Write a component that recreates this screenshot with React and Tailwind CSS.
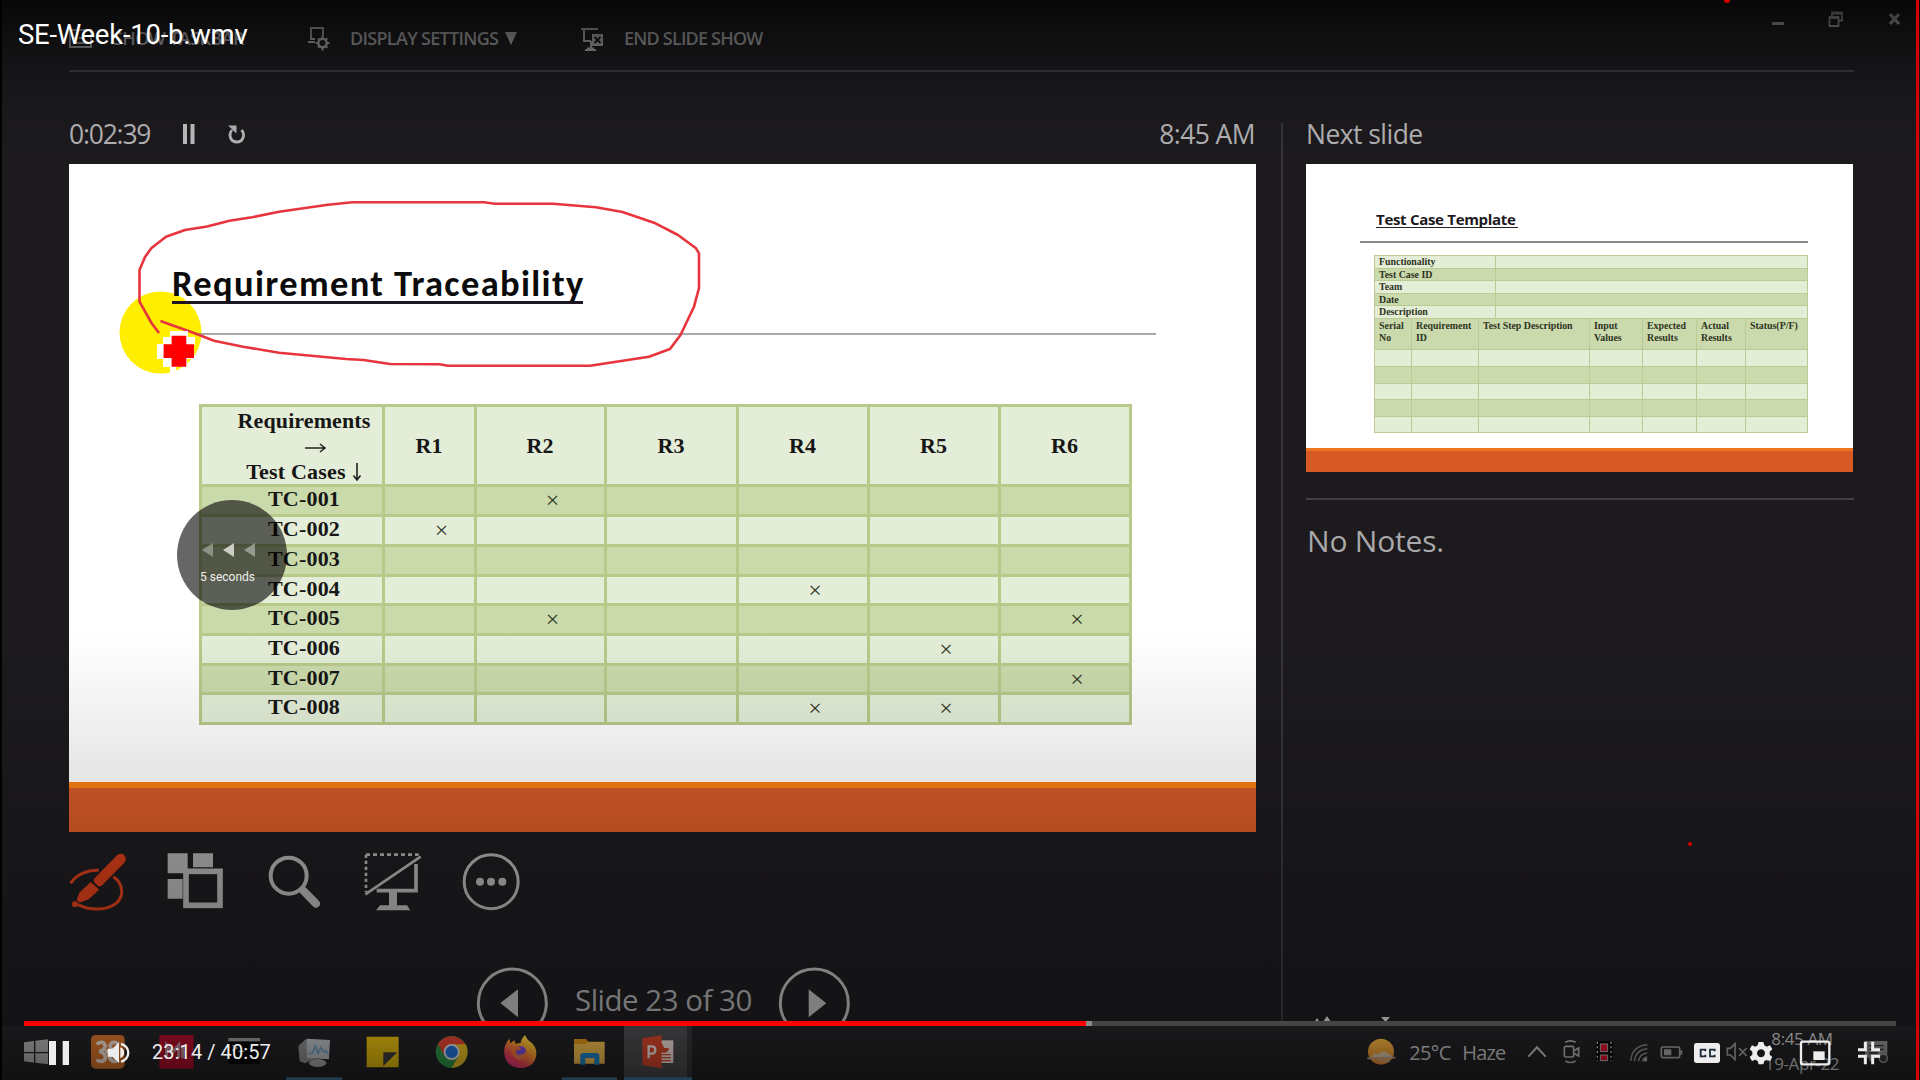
import React from "react";

const SEGOE = "font-['Open_Sans','Noto_Sans',sans-serif]";
const ROBOTO = "font-['Roboto',sans-serif]";
const SERIF = "font-['Liberation_Serif',serif]";

/* Icon whose drawing units are thirds of a pixel. */
function Icon({ x, y, w, h, className = "", children }) {
  return (
    <svg
      width={w}
      height={h}
      viewBox={`${x} ${y} ${w * 3} ${h * 3}`}
      className={`block shrink-0 ${className}`}
      fill="none"
    >
      {children}
    </svg>
  );
}

function TopBar() {
  return (
    <div className={`flex h-[70px] shrink-0 items-start text-[#9a9a9c] ${SEGOE}`}>
      <svg width="24" height="20" viewBox="0 0 24 20" className="mt-[29px] shrink-0" fill="none" stroke="#8b8b8b" strokeWidth="2">
        <rect x="1" y="1" width="21" height="17" />
        <path d="M4 14h15M4 9h3M10 9h3" />
      </svg>
      <span className="ml-[20px] mt-[25px] w-[134px] whitespace-nowrap text-[18px] font-semibold leading-[26px] tracking-[-0.6px]">SHOW TASKBAR</span>
      <svg width="26" height="26" viewBox="0 0 26 26" className="ml-[59px] mt-[26px] shrink-0" fill="none" stroke="#a0a0a0" strokeWidth="1.8">
        <path d="M17 10V2H5v11h4M2 16h7" />
        <circle cx="16.5" cy="17" r="4.2" strokeWidth="2.4" />
        <path d="M16.5 10v2M16.5 22v2.500M9.800 17h2M21 17h2.500M12 12.500l1.300 1.300M20 20.500l1.300 1.300M12 21.500l1.300-1.300M20 13.500l1.300-1.300" strokeWidth="2.200" />
      </svg>
      <span className="ml-[18px] mt-[25px] w-[152px] whitespace-nowrap text-[18px] font-semibold leading-[26px] tracking-[-0.7px]">DISPLAY SETTINGS</span>
      <svg width="14" height="14" viewBox="0 0 14 14" className="ml-[2px] mt-[32px] shrink-0">
        <path d="M1 0h12L7 13z" fill="#a0a0a0" />
      </svg>
      <svg width="26" height="26" viewBox="0 0 26 26" className="ml-[62px] mt-[27px] shrink-0" fill="none" stroke="#a0a0a0" strokeWidth="2">
        <path d="M1 2h17M4 2v12h7M11 14v7M5 23h11" />
        <path d="M7 22h7" strokeWidth="3" />
        <rect x="12" y="7" width="11" height="12" fill="#a0a0a0" stroke="none" />
        <path d="M14.500 10l6 6M20.500 10l-6 6" stroke="#111" strokeWidth="1.800" />
      </svg>
      <span className="ml-[18px] mt-[25px] whitespace-nowrap text-[18px] font-semibold leading-[26px] tracking-[-0.8px]">END SLIDE SHOW</span>
      <div className="ml-auto mr-[18px] mt-[10px] flex items-start">
        <svg width="14" height="18" viewBox="0 0 14 18"><path d="M1 12h12v3H1z" fill="#a0a0a0" /></svg>
        <svg width="16" height="18" viewBox="0 0 16 18" className="ml-[43px]" fill="none" stroke="#999" strokeWidth="1.800">
          <path d="M4 6V2.500h10v8h-3M4 3.500h10" /><path d="M1.500 7h9v9h-9zM1.500 8h9" />
        </svg>
        <svg width="14" height="18" viewBox="0 0 14 18" className="ml-[44px]"><path d="M2 4l9 10M11 4L2 14" stroke="#a0a0a0" strokeWidth="3.200" /></svg>
      </div>
    </div>
  );
}

const rows = [
  ["TC-001", 2],
  ["TC-002", 1],
  ["TC-003"],
  ["TC-004", 4],
  ["TC-005", 2, 6],
  ["TC-006", 5],
  ["TC-007", 6],
  ["TC-008", 4, 5],
];

function TraceTable() {
  return (
    <div className={`ml-[130px] grid w-[933px] grid-cols-[180px_89px_127px_129px_128px_128px_128px] grid-rows-[77px_27px_27px_27px_26px_27px_27px_26px_27px] gap-[3px] border-[3px] border-[#b8c98a] bg-[#b8c98a] text-[22px] font-bold text-[#161616] ${SERIF}`}>
      <div className="flex flex-col items-center bg-[#e4edd7] pl-[24px] leading-[25px]">
        <span className="mt-px tracking-[0.1px]">Requirements</span>
        <svg width="24" height="12" viewBox="0 0 24 12" className="mb-[5px] mt-[9px] ml-[24px]" fill="none" stroke="#222" strokeWidth="1.500">
          <path d="M1 6h20M16 2l5 4-5 4" />
        </svg>
        <span className="flex items-center tracking-[0.200px]">
          Test Cases
          <svg width="10" height="20" viewBox="0 0 10 20" className="ml-[6px]" fill="none" stroke="#222" strokeWidth="1.600">
            <path d="M5 1v17M1.500 13.500L5 18l3.500-4.500" />
          </svg>
        </span>
      </div>
      {[1, 2, 3, 4, 5, 6].map((n) => (
        <div key={n} className="flex items-center justify-center bg-[#e4edd7] pr-px">R{n}</div>
      ))}
      {rows.map(([name, ...marks], r) => (
        <React.Fragment key={name}>
          <div className={`flex items-start justify-center whitespace-nowrap pl-[24px] leading-[24px] tracking-[0.200px] ${r % 2 ? "bg-[#e3edd7]" : "bg-[#cadaab]"}`}>{name}</div>
          {[1, 2, 3, 4, 5, 6].map((c) => (
            <div key={c} className={`flex items-start justify-center pl-[24px] pt-px ${r % 2 ? "bg-[#e3edd7]" : "bg-[#cadaab]"}`}>
              {marks.includes(c) && (
                <span className="text-[24px] font-normal leading-[24px] text-[#2c3222]">×</span>
              )}
            </div>
          ))}
        </React.Fragment>
      ))}
    </div>
  );
}

const stroke =
  "M159 333L151.500 323 139.500 301.700V270L145 257 151.500 248 166 236.700 185 230 207 226.500 229.600 220.700 252 217.300 279 211.700 328 204.700 352.400 202.300H484L495 203.700H553L596 207.300 622.500 212 654 222.700 678 235 696 248.300 699 253.300V288L694 306.700 680.500 335 670 349 649 356.700 590 365.700H448L439.500 364.300 390 364 363.600 360 346 359 279 352.700 243 346.700 214 340.700 194 333 160.400 321";

function CurrentSlide() {
  return (
    <div className="relative flex h-[668px] w-[1187px] flex-col bg-white">
      <svg className="absolute left-0 top-0" width="1187" height="260" viewBox="69 164 1187 260" fill="none">
        <circle cx="160.500" cy="332.500" r="41" fill="#ffee00" />
        <path d="M195 334H1156" stroke="#8d8d90" strokeWidth="1.600" />
      </svg>
      <div className="relative ml-[103px] mt-[98px] h-[42px] w-[411px] whitespace-nowrap border-b-[3px] border-[#1b1622] pt-[2px] font-['Carlito','Lato',sans-serif] text-[36.500px] font-bold leading-[40px] tracking-[1.350px] text-[#0b0b0b]">
        Requirement Traceability
      </div>
      <svg className="absolute left-0 top-0" width="1187" height="260" viewBox="69 164 1187 260" fill="none">
        <path d={stroke} stroke="#e8343c" strokeWidth="2.600" strokeLinejoin="round" />
        <path d="M170 331h18v6h7v8h-1v14h-7v8h-11v7h-6v-7h-7v-8h-6v-15h6v-7h7z" fill="#fff" />
        <path d="M171.600 335.700h14.700v8.600h7.700V358h-7.700v8.700h-14.700V358h-8v-13.700h8z" fill="#ff0000" />
      </svg>
      <div className="mt-[100px]"><TraceTable /></div>
      <div className="mt-auto h-[50px] border-t-[6px] border-[#fa8010] bg-[#d65a27]" />
    </div>
  );
}

function Tools() {
  return (
    <div className="mt-[20px] flex h-[60px] items-start">
      <Icon x={57} y={276} w={58} h={60}>
        <path d="M62 370C78 345 112 329 146 331M190 350C222 372 222 410 198 430C172 452 118 452 84 434" stroke="#c93a18" strokeWidth="9" />
        <path d="M212 297L146 364" stroke="#c93a18" strokeWidth="31" strokeLinecap="round" />
        <path d="M122 366L149 388 116 418 88 428 80 420 88 398z" fill="#c93a18" />
        <path d="M124 362L150 388" stroke="#17161a" strokeWidth="5" />
        <circle cx="75" cy="433" r="9" fill="#c93a18" />
      </Icon>
      <Icon x={351} y={276} w={58} h={60} className="ml-[40px]">
        <path d="M353 280h60v60h-60zM429 280h60v42h-60zM353 357h45v59h-45z" fill="#a8a6a7" />
        <rect x="408" y="334" width="102" height="102" stroke="#a8a6a7" strokeWidth="17" />
      </Icon>
      <Icon x={651} y={276} w={54} h={60} className="ml-[42px]">
        <circle cx="716" cy="347" r="54" stroke="#a8a6a7" strokeWidth="12" />
        <path d="M758 390L798 431" stroke="#a8a6a7" strokeWidth="24" strokeLinecap="round" />
      </Icon>
      <Icon x={942} y={276} w={58} h={60} className="ml-[43px]">
        <path d="M948 284H1106" stroke="#a8a6a7" strokeWidth="8" strokeDasharray="12 9" />
        <path d="M948 284V396" stroke="#a8a6a7" strokeWidth="8" strokeDasharray="10 8" />
        <path d="M946 403L1112 290" stroke="#a8a6a7" strokeWidth="8" />
        <path d="M1098 312V392H980" stroke="#a8a6a7" strokeWidth="11" />
        <path d="M1017 392h24v44h30l10 15H978l12-15h27z" fill="#a8a6a7" />
      </Icon>
      <Icon x={1236} y={276} w={58} h={60} className="ml-[40px]">
        <circle cx="1323.500" cy="365" r="81" stroke="#a8a6a7" strokeWidth="9" />
        <g fill="#a8a6a7"><circle cx="1290" cy="365" r="12" /><circle cx="1323" cy="365" r="12" /><circle cx="1357" cy="365" r="12" /></g>
      </Icon>
    </div>
  );
}

function SlideNav() {
  return (
    <div className="ml-[407px] mt-[54px] flex h-[58px] w-[375px] items-start overflow-hidden">
      <Icon x={48} y={78} w={73} h={73}>
        <circle cx="157" cy="189" r="102" stroke="#b0b0b0" strokeWidth="9" />
        <path d="M174 148v84l-53-43z" fill="#b0b0b0" />
      </Icon>
      <span className={`ml-[26px] mt-[13px] w-[178px] whitespace-nowrap text-[29.500px] leading-[42px] tracking-[-0.500px] text-[#a5a4a6] ${SEGOE}`}>Slide 23 of 30</span>
      <Icon x={954} y={78} w={73} h={73} className="ml-[25px]">
        <circle cx="1063" cy="189" r="102" stroke="#b0b0b0" strokeWidth="9" />
        <path d="M1046 148v84l53-42z" fill="#b0b0b0" />
      </Icon>
    </div>
  );
}

function Cell({ dark, children, head }) {
  return (
    <div className={`overflow-visible whitespace-nowrap pl-[4px] ${head ? "pt-[1px] leading-[12px]" : "leading-[12px]"} ${dark ? "bg-[#cbdaad]" : "bg-[#e4edd6]"}`}>
      {children}
    </div>
  );
}

function NextSlide() {
  const heads = ["Serial\nNo", "Requirement\nID", "Test Step Description", "Input\nValues", "Expected\nResults", "Actual\nResults", "Status(P/F)"];
  return (
    <div className="flex h-[308px] w-[547px] flex-col bg-white">
      <div className={`ml-[70px] mt-[45px] h-[19px] w-[142px] whitespace-nowrap border-b-[1.500px] border-[#222] pt-px text-[15px] font-bold leading-[19px] tracking-[-0.300px] text-[#1c1a20] ${SEGOE}`}>Test Case Template</div>
      <div className="ml-[54px] mt-[13px] h-[1.500px] w-[448px] bg-[#8a8a8e]" />
      <div className={`ml-[68px] mt-[12px] w-[434px] border border-[#bccb93] bg-[#bccb93] text-[9.900px] font-bold text-[#2d3322] ${SERIF}`}>
        <div className="grid grid-cols-[120px_311px] grid-rows-[12px_11.500px_11.500px_11.500px_11.500px] gap-px">
          {["Functionality", "Test Case ID", "Team", "Date", "Description"].map((t, i) => (
            <React.Fragment key={t}>
              <Cell dark={i % 2 === 1}>{t}</Cell>
              <Cell dark={i % 2 === 1} />
            </React.Fragment>
          ))}
        </div>
        <div className="mt-px grid grid-cols-[36px_66px_110px_52px_53px_48px_61px] grid-rows-[30.500px_15.500px_16px_15.500px_15.500px_15.500px] gap-px">
          {heads.map((t) => (
            <Cell key={t} dark head><span className="whitespace-pre">{t}</span></Cell>
          ))}
          {Array.from({ length: 35 }, (_, i) => (
            <Cell key={i} dark={Math.floor(i / 7) % 2 === 1} />
          ))}
        </div>
      </div>
      <div className="mt-auto h-[24px] border-t-[3px] border-[#ee7420] bg-[#d75926]" />
    </div>
  );
}

function Presenter() {
  return (
    <div className="flex h-[1024px] flex-col overflow-hidden pl-[69px]">
      <TopBar />
      <div className="h-[2px] w-[1785px] shrink-0 bg-[#3c3a3d]" />
      <div className="flex items-start pt-[51px]">
        <div className="w-[1187px] shrink-0">
          <div className={`flex h-[41px] items-start text-[#b2b1b3] ${SEGOE}`}>
            <span className="mt-[-7px] w-[84px] whitespace-nowrap text-[26.500px] leading-[36px] tracking-[-1.200px]">0:02:39</span>
            <svg width="14" height="20" viewBox="0 0 14 20" className="ml-[29px] mt-px"><path d="M1 0h4v20H1zM8.500 0h4v20h-4z" fill="#bcbbbd" /></svg>
            <svg width="20" height="22" viewBox="0 0 20 22" className="ml-[31px]" fill="none">
              <path d="M14.500 7C19 12 15.500 19 10 19C3.500 19 1 12 5 7" stroke="#b4b3b5" strokeWidth="2.800" />
              <path d="M1 2.500l8.500 0v8z" fill="#b4b3b5" />
            </svg>
            <span className="ml-auto mr-px mt-[-7px] whitespace-nowrap text-[26.500px] leading-[36px] tracking-[-0.600px]">8:45 AM</span>
          </div>
          <CurrentSlide />
          <Tools />
          <SlideNav />
        </div>
        <div className="ml-[25px] h-[900px] w-[2px] shrink-0 bg-[#373538]" />
        <div className={`ml-[23px] w-[548px] ${SEGOE}`}>
          <div className="h-[41px] text-[#b2b1b3]">
            <div className="-translate-y-[7px] whitespace-nowrap text-[26.500px] leading-[36px] tracking-[-0.550px]">Next slide</div>
          </div>
          <NextSlide />
          <div className="mt-[26px] h-[1.500px] w-[548px] bg-[#403e41]" />
          <div className="ml-[1px] mt-[20px] whitespace-nowrap text-[30px] leading-[42px] tracking-[-0.200px] text-[#a9a8aa]">No Notes.</div>
          <div className="mt-[452px] flex h-[10px] items-start">
            <svg width="90" height="10" viewBox="0 0 90 10" className="ml-[5px]" fill="#d0d0d0"><path d="M2 10l4-6 4 6zM12 8l4-6 4 6zM70 3h9l-4.500 5z" /></svg>
          </div>
        </div>
      </div>
    </div>
  );
}

function Taskbar() {
  return (
    <div className={`flex h-[54px] items-stretch bg-[#222124] text-[#c8c8c8] ${SEGOE}`}>
      <Icon x={0} y={48} w={80} h={54}>
        <path d="M72 97l30-4v33H72zM106 92l38-4v38h-38zM72 130h30v28l-30-4zM106 130h38v33l-38-5z" fill="#b0b0b0" />
      </Icon>
      <Icon x={240} y={48} w={65} h={54}>
        <rect x="273" y="75" width="101" height="101" rx="14" fill="#d8742a" />
        <path d="M290 103q18-14 26 4-2 14-18 17 20 6 18 22-8 14-27 4M356 103q-18-14-26 4 2 14 18 17-20 6-18 22 8 14 27 4M316 125h16" stroke="#f2e2d5" strokeWidth="11" />
      </Icon>
      <Icon x={435} y={48} w={70} h={54}>
        <rect x="478" y="75" width="103" height="101" fill="#ad0d2b" />
        <path d="M500 145V105l18 22 18-22v40M548 105v40" stroke="#b98c94" strokeWidth="9" />
      </Icon>
      <Icon x={645} y={48} w={65} h={54}>
        <rect x="685" y="84" width="95" height="78" fill="#050505" />
        <rect x="685" y="84" width="95" height="10" fill="#98989a" />
        <path d="M697 106l14 8-14 8M715 124h18" stroke="#aaa" strokeWidth="4" />
      </Icon>
      <Icon x={840} y={48} w={70} h={54}>
        <path d="M895 108l22-20 28 8v50l-30 14-16-6z" fill="#8c8d90" />
        <path d="M920 86l70 4-3 58-66-4z" fill="#b9bfc4" />
        <path d="M926 132l12-4 8-20 8 22 8-18 8 14 6-4 8 8" stroke="#6c9dbd" strokeWidth="5" />
        <ellipse cx="953" cy="159" rx="26" ry="12" fill="#a7a7a8" />
        <path d="M858 202h169v8H858z" fill="#45799c" />
      </Icon>
      <Icon x={30} y={48} w={66} h={54}>
        <path d="M80 80h96v92H80z" fill="#e6bd0c" />
        <path d="M130 127h42l-42 41z" fill="#3f3d3f" />
      </Icon>
      <Icon x={228} y={48} w={71} h={54}>
        <circle cx="335" cy="126" r="48" fill="#2f9548" />
        <path d="M335 102H376.500A48 48 0 0 1 335 174L356 138z" fill="#edbd25" />
        <path d="M335 103H376.500A48 48 0 0 0 293.500 102L314 138z" fill="#e64434" />
        <circle cx="335" cy="126" r="24" fill="#e6e6e6" />
        <circle cx="335" cy="126" r="18.500" fill="#2374dc" />
      </Icon>
      <Icon x={441} y={48} w={69} h={54}>
        <defs>
          <linearGradient id="fox" x1="570" y1="80" x2="510" y2="170" gradientUnits="userSpaceOnUse">
            <stop stopColor="#ffe43d" /><stop offset=".4" stopColor="#fb9a2a" /><stop offset=".75" stopColor="#f0405a" /><stop offset="1" stopColor="#d92f8a" />
          </linearGradient>
        </defs>
        <path d="M493 132q-3-28 15-46l3 14 12-9 4 11q10-4 15-3 1-13 14-24 4 14 16 21 18 14 17 36-3 40-47 42-44-1-49-42z" fill="url(#fox)" />
        <circle cx="541" cy="126" r="18" fill="#7a4be0" />
        <path d="M515 112q18-8 28 2-2 8-14 8-4 10 8 12 18 0 20-14 8 26-16 29-28-2-26-37z" fill="#fa7d35" opacity=".85" />
      </Icon>
      <Icon x={648} y={48} w={68} h={54}>
        <path d="M702 88h36l6 7h50v66h-92z" fill="#f0bd4d" />
        <path d="M702 88h36l6 7-8 7h-34z" fill="#df9317" />
        <path d="M721 164v-26q0-9 9-9h39q9 0 9 9v26h-15v-20h-27v20z" fill="#1d84c6" />
        <path d="M665 202h166v8H665z" fill="#45799c" />
      </Icon>
      <Icon x={852} y={48} w={68} h={54}>
        <path d="M852 48h189v162H852z" fill="#4b4b4e" />
        <path d="M1041 48h15v162h-15z" fill="#353538" />
        <path d="M852 202h204v8H852z" fill="#3d7fa9" />
        <path d="M958 91h42v68h-42z" fill="#efdcd8" />
        <path d="M965 100a15 15 0 1 0 22 14h-14z" fill="#d64728" />
        <path d="M964 134h28M964 143h28M964 152h28" stroke="#d64728" strokeWidth="4" />
        <path d="M907 85l58-9v99l-58-10z" fill="#d6452a" />
        <path d="M926 145V109h9q11 0 11 11t-11 11h-8" stroke="#f2e6e3" strokeWidth="7" />
      </Icon>
      <Icon x={180} y={63} w={49} h={54} className="ml-auto">
        <defs>
          <linearGradient id="sun" x1="0" y1="0" x2="0" y2="1"><stop stopColor="#f4b83e" /><stop offset="1" stopColor="#e88a30" /></linearGradient>
        </defs>
        <circle cx="243" cy="140" r="39" fill="url(#sun)" />
        <path d="M214 156q8-16 22-8 12-16 30-2 8 2 10 10z" fill="#dcc3a6" />
        <path d="M202 160h46M236 168h34M250 158h36" stroke="#bba696" strokeWidth="5" />
      </Icon>
      <span className="mt-[13px] w-[53px] whitespace-nowrap text-[20px] leading-[28px] tracking-[-0.700px]">25°C</span>
      <span className="mt-[13px] w-[45px] whitespace-nowrap text-[20px] leading-[28px] tracking-[-0.900px]">Haze</span>
      <Icon x={621} y={63} w={293 / 3 + 16} h={54}>
        <path d="M685 155l26-28 26 28" stroke="#c5c5c5" strokeWidth="6" />
        <rect x="793" y="124" width="28" height="32" rx="5" stroke="#b5b5b5" strokeWidth="5" />
        <path d="M822 137l14-8v24l-14-8M796 112q15-9 31 0M796 168q15 9 31 0" stroke="#b5b5b5" strokeWidth="5" />
        <rect x="888" y="108" width="50" height="60" fill="#050505" />
        <path d="M892 110v58M933 110v58" stroke="#d5d5d5" strokeWidth="4" strokeDasharray="6 8" />
        <path d="M901 117h22v23h-22zM901 150h22v17h-22z" fill="#e00a30" stroke="#b9b9b9" strokeWidth="3" />
      </Icon>
      <Icon x={62} y={63} w={150} h={54} className="ml-[-1px]">
        <g stroke="#8d8d8d" strokeWidth="4.500">
          <path d="M94 168Q98 122 144 119M105 169Q109 134 144 131M117 169Q121 146 144 144M129 169Q132 158 144 156" />
        </g>
        <circle cx="138" cy="164" r="6" fill="#aaa" />
        <rect x="186" y="126" width="55" height="32" rx="4" stroke="#a5a5a5" strokeWidth="5" />
        <path d="M194 133h22v18h-22zM243 136h6v13h-6z" fill="#a5a5a5" />
        <path d="M384 130h9l14-14v48l-14-14h-9zM419 129l23 24M442 129l-23 24" stroke="#a5a5a5" strokeWidth="5" />
      </Icon>
      <div className="ml-[-9px] mr-[9px] mt-px flex w-[82px] flex-col items-center text-[17px] leading-[24.500px] tracking-[-0.400px]">
        <span className="whitespace-nowrap">8:45 AM</span>
        <span className="whitespace-nowrap">19-Apr-22</span>
      </div>
      <Icon x={756} y={63} w={68} h={54}>
        <path d="M795 108h67v50h-40l-14 12v-12h-13z" fill="#8f8f8f" />
        <path d="M806 122h45M806 133h45M806 144h28" stroke="#2c2c2c" strokeWidth="4" />
        <circle cx="850" cy="160" r="12" fill="#333" stroke="#999" strokeWidth="4" />
      </Icon>
    </div>
  );
}

function PlayerControls() {
  return (
    <div className="absolute inset-x-0 bottom-0 flex h-[59px] flex-col">
      <div className="ml-[24px] flex h-[5px] w-[1872px] bg-[#454545]">
        <div className="w-[1062px] bg-[#ff0000]" />
        <div className="w-[6px] bg-[#8a8a8a]" />
      </div>
      <div className="flex h-[54px] text-[#ededed]">
        <Icon x={0} y={48} w={145} h={54}>
          <path d="M147 93h21v72h-21zM188 93h19v72h-19z" fill="#ededed" />
          <path d="M323 116h14l20-19v62l-20-19h-14z" fill="#ededed" />
          <path d="M361 112a17 17 0 0 1 0 32z" fill="#ededed" />
          <path d="M363 102a27 27 0 0 1 0 53" stroke="#ededed" strokeWidth="7" />
        </Icon>
        <span className={`ml-[7px] mt-[12px] whitespace-nowrap text-[20px] leading-[28px] tracking-[0.080px] ${ROBOTO}`}>23:14 / 40:57</span>
        <Icon x={270} y={63} w={210} h={54} className="ml-auto mr-[20px]">
          <rect x="282" y="114" width="78" height="60" rx="8" fill="#ededed" />
          <path d="M316 139v-5h-14v20h14v-5M344 139v-5h-14v20h14v-5" stroke="#1a2a38" strokeWidth="5.500" />
          <path
            fillRule="evenodd"
            fill="#ededed"
            d="M476 111h14l3 10 7 4 10-4 7 12-8 7v9l8 7-7 12-10-4-7 4-3 10h-14l-3-10-7-4-10 4-7-12 8-7v-9l-8-7 7-12 10 4 7-4zM483 132.500a12 12 0 1 0 .1 0z"
          />
          <rect x="603" y="110" width="85" height="68" rx="6" stroke="#ededed" strokeWidth="7" />
          <path d="M640 139h34v26h-34z" fill="#ededed" />
          <path d="M796 110v24h-22M818 110v24h22M796 178v-24h-22M818 178v-24h22" stroke="#ededed" strokeWidth="9" />
        </Icon>
      </div>
    </div>
  );
}

export default function App() {
  return (
    <div className="relative h-[1080px] w-[1920px] overflow-hidden bg-[#1c1a1d]">
      <div className="flex h-full flex-col">
        <Presenter />
        <div className="h-[2px]" />
        <Taskbar />
      </div>

      <div className="absolute inset-x-0 top-0 h-[160px] bg-[linear-gradient(to_bottom,rgba(0,0,0,.72)_0,rgba(0,0,0,.5)_30px,rgba(0,0,0,.22)_72px,rgba(0,0,0,.05)_120px,transparent)]" />
      <div className="absolute inset-x-0 bottom-0 h-[450px] bg-[linear-gradient(to_bottom,transparent_0,rgba(0,0,0,.03)_50px,rgba(0,0,0,.1)_150px,rgba(0,0,0,.16)_205px,rgba(0,0,0,.26)_330px,rgba(0,0,0,.3)_400px,rgba(0,0,0,.5)_448px)]" />

      <div className="absolute inset-y-0 left-0 w-[2px] bg-black" />
      <div className="absolute inset-y-0 right-[1px] w-[3px] bg-[#d80000]" />
      <div className="absolute left-[1724px] top-[-3px] h-[6px] w-[6px] rounded-full bg-[#d80000]" />
      <div className="absolute left-[1688px] top-[842px] h-[4px] w-[4px] rounded-full bg-[#d00000]" />

      <div className={`absolute left-[18px] top-[17px] whitespace-nowrap text-[27.500px] leading-[36px] tracking-[-0.250px] text-white ${ROBOTO}`}>SE-Week-10-b.wmv</div>

      <div className={`absolute left-[177px] top-[500px] flex h-[110px] w-[110px] flex-col rounded-full bg-black/60 pl-[24px] pt-[43px] text-[12px] text-[#f0f0f0] ${ROBOTO}`}>
        <svg width="56" height="14" viewBox="0 0 56 14" fill="#fff">
          <path d="M12 0v14L1 7z" opacity=".35" />
          <path d="M33 0v14L22 7z" opacity=".7" />
          <path d="M54 0v14L43 7z" opacity=".4" />
        </svg>
        <span className="-ml-px mt-[13px] whitespace-nowrap leading-[14px]">5 seconds</span>
      </div>

      <PlayerControls />
    </div>
  );
}
